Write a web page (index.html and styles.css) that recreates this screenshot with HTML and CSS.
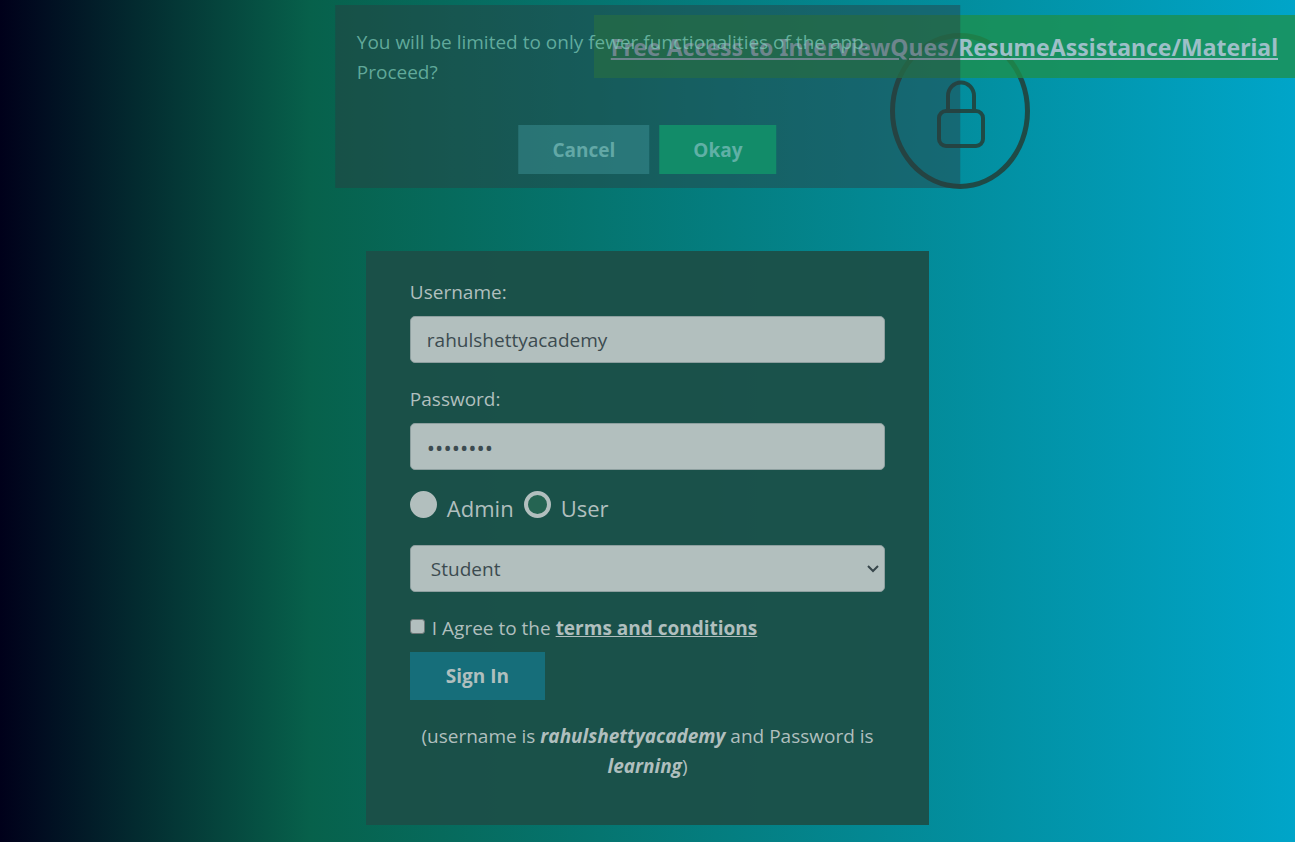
FILE: index.html
```
<!DOCTYPE html>
<html lang="en">
<head>
<meta charset="utf-8">
<title>Login</title>
<link rel="stylesheet" href="styles.css">
</head>
<body>
<header class="top">
  <div class="badge">
    <svg class="lock" viewBox="0 0 48 68" fill="none" stroke="currentColor" stroke-width="4" aria-hidden="true">
      <path d="M11 30V16a13 13.500 0 0 1 26 0v14"/>
      <rect x="2" y="31" width="44" height="35" rx="7"/>
    </svg>
  </div>
  <a class="banner" href="#">Free Access to InterviewQues/ResumeAssistance/Material</a>
</header>

<div class="modal" role="dialog" aria-labelledby="modal-text">
  <p id="modal-text" class="modal-text">You will be limited to only fewer functionalities of the app. Proceed?</p>
  <div class="modal-actions">
    <button class="btn btn-cancel" type="button">Cancel</button>
    <button class="btn btn-okay" type="button">Okay</button>
  </div>
</div>

<main>
  <form class="login">
    <div class="group">
      <label for="username">Username:</label>
      <input class="field" id="username" type="text" value="rahulshettyacademy">
    </div>
    <div class="group">
      <label for="password">Password:</label>
      <input class="field password" id="password" type="password" value="learning">
    </div>
    <div class="roles">
      <label class="role"><input class="radio" type="radio" name="role"><span>Admin</span></label>
      <label class="role"><input class="radio" type="radio" name="role" checked><span>User</span></label>
    </div>
    <div class="select-wrap">
      <select class="field select" aria-label="Role">
        <option>Student</option>
        <option>Teacher</option>
        <option>Consultant</option>
      </select>
      <svg class="chevron" viewBox="0 0 12 8" fill="none" stroke="currentColor" stroke-width="2" aria-hidden="true"><path d="M1 1l5 5 5-5"/></svg>
    </div>
    <div class="terms">
      <input class="check" id="terms" type="checkbox">
      <label for="terms">I Agree to the <a href="#">terms and conditions</a></label>
    </div>
    <button class="btn btn-signin" type="button">Sign In</button>
    <p class="hint">(username is <b><i>rahulshettyacademy</i></b> and Password is <b><i>learning</i></b>)</p>
  </form>
</main>
</body>
</html>
```
FILE: styles.css
```
* { box-sizing: border-box; }

body {
  margin: 0;
  min-height: 100vh;
  font-family: "Open Sans", "Noto Sans", sans-serif;
  font-size: 19px;
  line-height: 30px;
  color: #b0bfbe;
  background: linear-gradient(90deg, #00001a 0%, #07614b 24%, #00a5c9 100%);
}

p { margin: 0; }

a { color: inherit; font-weight: 700; }

.top {
  display: flex;
  justify-content: flex-end;
  padding: 33px 20.5% 0 0;
}

.badge {
  display: flex;
  justify-content: center;
  width: 140px;
  height: 156px;
  padding: 42px 0 0 2px;
  border: 5px solid #1f4a46;
  border-radius: 50%;
  color: #1f4a46;
}

.lock { width: 48px; height: 68px; }

.banner {
  position: absolute;
  top: 15px;
  right: 0;
  padding: 17px 17px 16px;
  font-family: "Noto Sans", "Open Sans", sans-serif;
  font-size: 23px;
  white-space: nowrap;
  color: #9dbfc8;
  background: rgba(30, 143, 75, 0.78);
}

.modal {
  position: absolute;
  top: 5px;
  left: 50%;
  width: 48.3%;
  padding: 22px 22px 14px;
  transform: translateX(-50%);
  background: rgba(46, 57, 62, 0.43);
}

.modal-text { color: rgba(130, 208, 190, 0.7); }

.modal-actions {
  display: flex;
  justify-content: center;
  gap: 10px;
  margin-top: 38px;
}

.btn {
  height: 48px;
  padding: 0 34px;
  border: 0;
  font: 700 19px/30px "Open Sans", "Noto Sans", sans-serif;
  color: #b0bfbe;
}

.btn-cancel { height: 49px; background: rgba(70, 160, 165, 0.4); color: #62a8a6; }
.btn-okay { height: 49px; background: #128c69; color: #60b0a6; }
.btn-signin { margin-top: 9px; padding: 0 36px; background: #166e7a; }

.login {
  width: 43.5%;
  margin: 62px auto 0;
  padding: 26px 44px 44px;
  background: rgba(27, 79, 72, 0.95);
}

.group { display: grid; gap: 9px; margin-bottom: 21px; }

.field {
  width: 100%;
  height: 47px;
  padding: 0 16px;
  border: 1px solid #8d9f9f;
  border-radius: 5px;
  font: 400 19px/30px "Open Sans", "Noto Sans", sans-serif;
  color: #3c4b50;
  background: #b2bfbe;
}

.password { font-size: 22px; }

.roles { display: flex; gap: 10px; font-size: 22px; line-height: 34px; }

.role { display: flex; gap: 10px; }

.radio {
  appearance: none;
  width: 27px;
  height: 27px;
  margin: 0;
  border: 4px solid #b2bfbe;
  border-radius: 50%;
  background: #b2bfbe;
}

.radio:checked { background: #256452; }

.select-wrap { display: grid; position: relative; margin-top: 20px; }

.select { appearance: none; padding: 0 20px; }

.chevron {
  position: absolute;
  right: 6px;
  top: 20px;
  width: 12px;
  height: 8px;
  color: #37464b;
}

.terms { display: flex; gap: 7px; margin-top: 21px; }

.check {
  appearance: none;
  width: 15px;
  height: 15px;
  margin: 6px 0 0;
  border: 1px solid #6d7777;
  border-radius: 3px;
  background: #b2bfbe;
}

.hint { margin-top: 21px; text-align: center; }
```
